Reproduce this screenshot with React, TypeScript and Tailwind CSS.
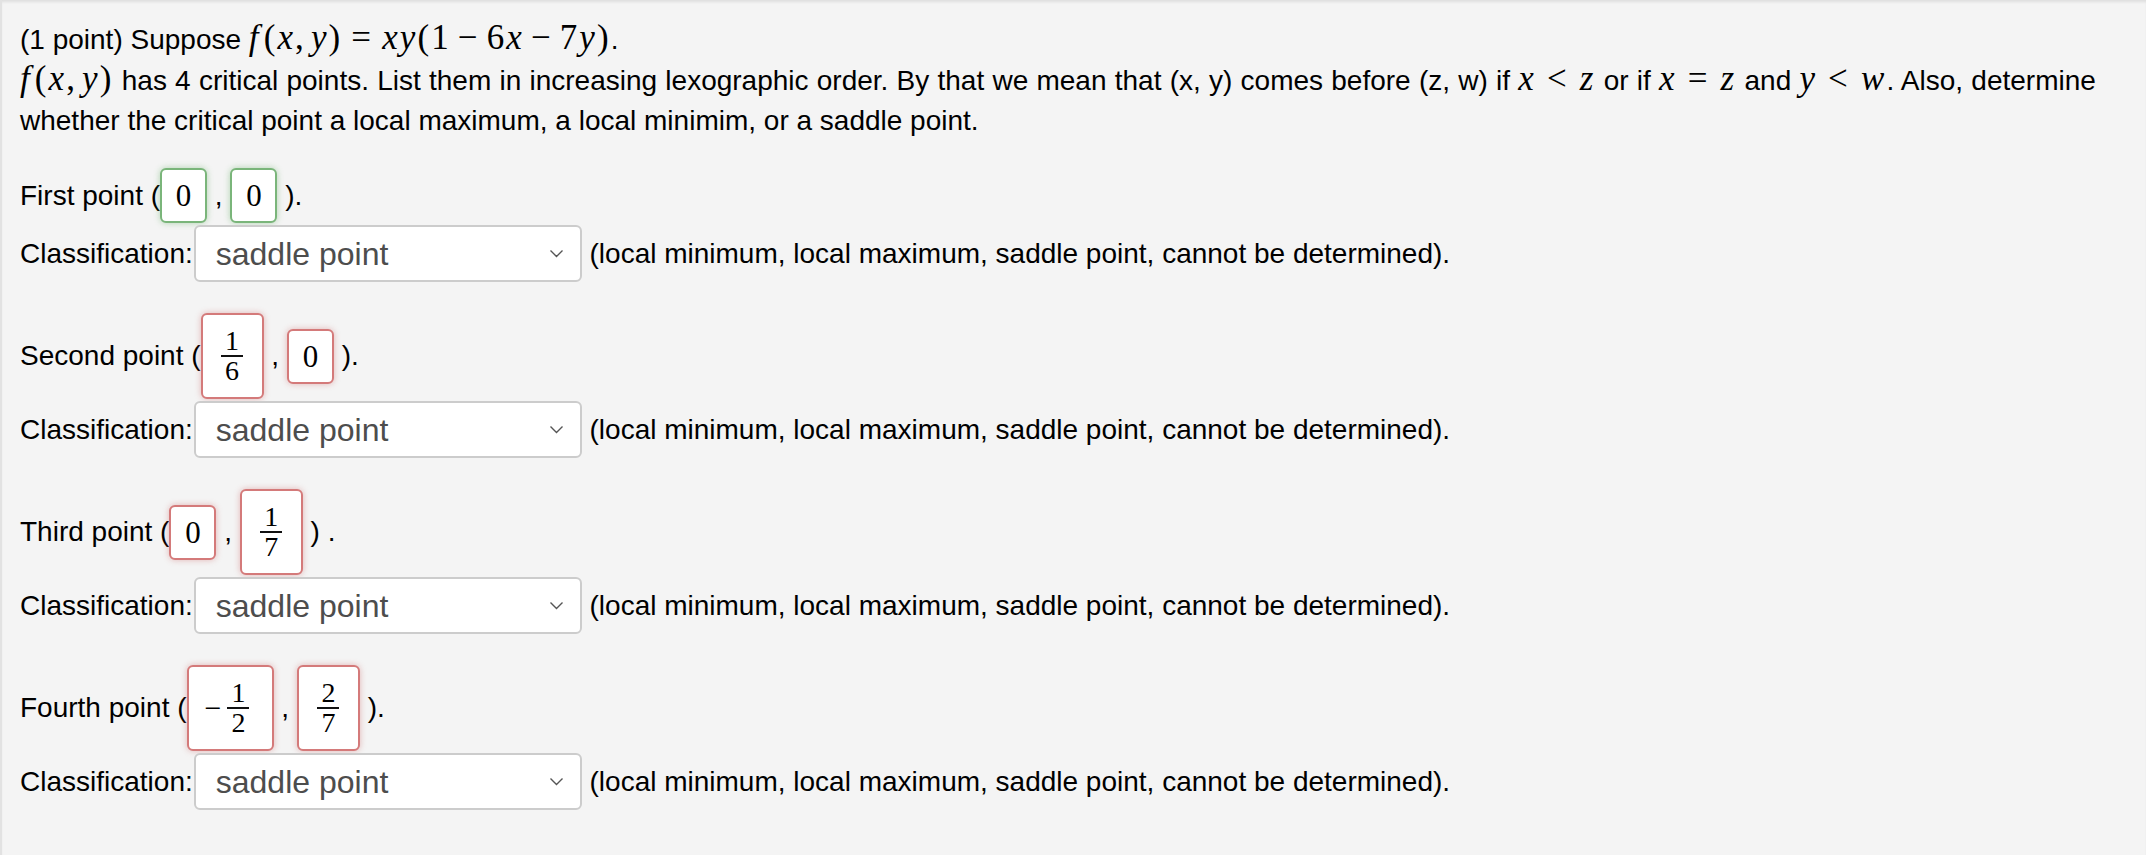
import React from 'react';

const V: React.FC<{ children: React.ReactNode; className?: string }> = ({ children, className }) => (
  <i className={className}>{children}</i>
);

const M: React.FC<{ children: React.ReactNode }> = ({ children }) => (
  <span className="font-['Liberation_Serif','Times_New_Roman',serif] text-[35px] leading-[40px] tracking-[0.06em] [word-spacing:0]">
    {children}
  </span>
);

const Box: React.FC<{ ok?: boolean; className: string; children: React.ReactNode }> = ({ ok, className, children }) => {
  const tone = ok
    ? "border-[#7ab57a] shadow-[0_0_6px_rgba(90,170,90,0.45)]"
    : "border-[#d47a7a] shadow-[0_0_6px_rgba(200,90,90,0.4)]";
  return (
    <span
      className={`flex items-center justify-center rounded-[6px] border-2 bg-white font-['Liberation_Serif','Times_New_Roman',serif] ${tone} ${className}`}
    >
      {children}
    </span>
  );
};

const Frac: React.FC<{ n: string; d: string }> = ({ n, d }) => (
  <span className="flex flex-col items-center text-[28px]">
    <span className="leading-[22px]">{n}</span>
    <span className="mt-[3px] h-[2px] w-[22px] bg-[#111]"></span>
    <span className="mt-[3px] leading-[22px]">{d}</span>
  </span>
);

const Zero: React.FC<{ ok?: boolean }> = ({ ok }) => (
  <Box ok={ok} className="h-[55px] w-[47px]">
    <span className="text-[31px] leading-none">0</span>
  </Box>
);

const Select: React.FC = () => (
  <div className="ml-[1px] flex h-[57px] w-[388px] items-center justify-between rounded-[6px] border-2 border-[#cccccc] bg-white pl-[20px] pr-[16px] text-[32px] text-[#4d4d4d]">
    <span>saddle point</span>
    <svg width="15" height="9" viewBox="0 0 15 9">
      <path d="M1.5 1.5l6 6 6-6" fill="none" stroke="#555" strokeWidth="1.4" />
    </svg>
  </div>
);

const Classification: React.FC = () => (
  <div className="mt-[2px] flex items-center">
    <span>Classification:</span>
    <Select />
    <span className="whitespace-pre"> (local minimum, local maximum, saddle point, cannot be determined).</span>
  </div>
);

const Sep: React.FC<{ text: string }> = ({ text }) => <span className="whitespace-pre">{text}</span>;

export default function App() {
  return (
    <div className="min-h-[855px] border-l-2 border-[#e2e2e2] bg-[#f4f4f4] pl-[18px] pt-[18px] font-['Liberation_Sans',Arial,sans-serif] text-[28px] leading-[40px] text-black shadow-[inset_0_3px_3px_-1px_rgba(0,0,0,0.09)]">
      <div className="whitespace-nowrap">
        <div>
          (1 point) Suppose{' '}
          <M>
            <V className="mr-[3px]">f</V>(<V>x</V>,<span className="ml-[5px]"></span>
            <V>y</V>)<span className="mx-[9px]">=</span>
            <V>xy</V>(1<span className="mx-[7px]">−</span>6<V>x</V>
            <span className="mx-[7px]">−</span>7<V>y</V>)
          </M>
          .
        </div>
        <div className="-mt-[1px] [word-spacing:0.45px]">
          <M>
            <V className="mr-[3px]">f</V>(<V>x</V>,<span className="ml-[5px]"></span>
            <V>y</V>)
          </M>{' '}
          has 4 critical points. List them in increasing lexographic order. By that we mean that (x, y) comes
          before (z, w) if{' '}
          <M>
            <V>x</V>
            <span className="mx-[11px]">&lt;</span>
            <V>z</V>
          </M>{' '}
          or if{' '}
          <M>
            <V>x</V>
            <span className="mx-[11px]">=</span>
            <V>z</V>
          </M>{' '}
          and{' '}
          <M>
            <V>y</V>
            <span className="mx-[11px]">&lt;</span>
            <V>w</V>
          </M>
          . Also, determine
        </div>
        <div>whether the critical point a local maximum, a local minimim, or a saddle point.</div>
      </div>

      <div className="mt-[27px]">
        <div className="flex items-center">
          <Sep text="First point (" />
          <Zero ok />
          <Sep text=" , " />
          <Zero ok />
          <Sep text=" )." />
        </div>
        <Classification />
      </div>

      <div className="mt-[31px]">
        <div className="flex items-center">
          <Sep text="Second point (" />
          <Box className="h-[86px] w-[63px]">
            <Frac n="1" d="6" />
          </Box>
          <Sep text=" , " />
          <Zero />
          <Sep text=" )." />
        </div>
        <Classification />
      </div>

      <div className="mt-[31px]">
        <div className="flex items-center">
          <Sep text="Third point (" />
          <Zero />
          <Sep text=" , " />
          <Box className="h-[86px] w-[63px]">
            <Frac n="1" d="7" />
          </Box>
          <Sep text=" ) ." />
        </div>
        <Classification />
      </div>

      <div className="mt-[31px]">
        <div className="flex items-center">
          <Sep text="Fourth point (" />
          <Box className="h-[86px] w-[87px] pr-[6px]">
            <span className="mr-[6px] text-[30px] leading-none">−</span>
            <Frac n="1" d="2" />
          </Box>
          <Sep text=" , " />
          <Box className="h-[86px] w-[63px]">
            <Frac n="2" d="7" />
          </Box>
          <Sep text=" )." />
        </div>
        <Classification />
      </div>
    </div>
  );
}
